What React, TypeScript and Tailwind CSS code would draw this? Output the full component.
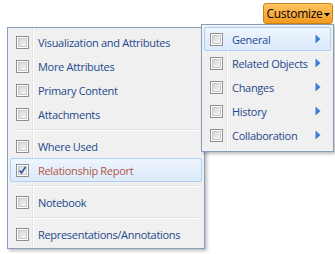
import React from "react";

const font = { fontFamily: '"Open Sans", "Noto Sans", sans-serif' };

function Checkbox({ checked = false }: { checked?: boolean }) {
  return (
    <div className="relative w-[13px] h-[13px] shrink-0 border border-[#8e8f8f] bg-white p-[1px]">
      <div className="w-full h-full bg-gradient-to-br from-[#d6d6d6] to-[#f7f7f7] border border-[#c9c9c9]" />
      {checked && (
        <svg className="absolute left-[1px] top-[1px]" width="9" height="9" viewBox="0 0 9 9">
          <path d="M1.5 4.5 L3.5 7 L7.5 1" stroke="#2a4fa8" strokeWidth="1.6" fill="none" />
        </svg>
      )}
    </div>
  );
}

function Row({
  label,
  checked = false,
  active = false,
  arrow = false,
  danger = false,
}: {
  label: string;
  checked?: boolean;
  active?: boolean;
  arrow?: boolean;
  danger?: boolean;
}) {
  return (
    <div
      className={
        "relative mx-[2px] h-[24px] flex items-center pl-[5px] pr-[8px] rounded-[2px] border " +
        (active
          ? "border-[#aecff7] bg-gradient-to-b from-[#eef5fd] to-[#dbeafc]"
          : "border-transparent")
      }
    >
      <Checkbox checked={checked} />
      <span
        className={
          "ml-[9px] flex-1 text-[11px] tracking-[-0.3px] leading-none whitespace-nowrap " +
          (danger ? "text-[#b5563e]" : "text-[#24488c]")
        }
      >
        {label}
      </span>
      {arrow && (
        <svg width="6" height="10" viewBox="0 0 6 10" className="mr-[1px]">
          <path d="M0.5 0.5 L5.5 5 L0.5 9.5 Z" fill="#3a7fd8" />
        </svg>
      )}
    </div>
  );
}

function Sep() {
  return (
    <div className="h-[8px] flex items-center px-[6px]">
      <div className="w-full h-[2px] border-t border-[#e0e0e0] border-b border-b-white" />
    </div>
  );
}

export default function App() {
  return (
    <div className="relative w-[335px] h-[254px] bg-white overflow-hidden" style={font}>
      <div className="flex justify-end pt-[3px] pr-[2px]">
        <button className="h-[21px] w-[70px] flex items-center justify-center gap-[2px] pl-[1px] rounded-[3px] border border-[#c98417] bg-gradient-to-b from-[#fdc45e] to-[#f59a1c] text-[12px] tracking-[-0.3px] text-black leading-none">
          <span>Customize</span>
          <svg width="6" height="4" viewBox="0 0 6 4" className="mt-[3px] shrink-0">
            <path d="M0 0 L6 0 L3 3.5 Z" fill="#000" />
          </svg>
        </button>
      </div>

      {/* left menu */}
      <div className="absolute left-[7px] top-[27px] w-[198px] h-[222px] border border-[#8a9cbc] bg-[#f0f0f0] py-[2px] shadow-[2px_2px_3px_rgba(0,0,0,0.25)]">
        <div className="absolute left-[24px] top-0 bottom-0 w-[2px] border-l border-[#e2e3e3] border-r border-r-white" />
        <div className="relative">
          <Row label="Visualization and Attributes" />
          <Row label="More Attributes" />
          <Row label="Primary Content" />
          <Row label="Attachments" />
          <Sep />
          <Row label="Where Used" />
          <Row label="Relationship Report" checked active danger />
          <Sep />
          <Row label="Notebook" />
          <Sep />
          <Row label="Representations/Annotations" />
        </div>
      </div>

      {/* right submenu */}
      <div className="absolute z-10 left-[201px] top-[24px] w-[133px] h-[128px] border border-[#8a9cbc] bg-[#f0f0f0] pt-[2px] shadow-[2px_2px_3px_rgba(0,0,0,0.25)]">
        <div className="absolute left-[24px] top-0 bottom-0 w-[2px] border-l border-[#e2e3e3] border-r border-r-white" />
        <div className="relative">
          <Row label="General" arrow active />
          <Row label="Related Objects" arrow />
          <Row label="Changes" arrow />
          <Row label="History" arrow />
          <Row label="Collaboration" arrow />
        </div>
      </div>
    </div>
  );
}
